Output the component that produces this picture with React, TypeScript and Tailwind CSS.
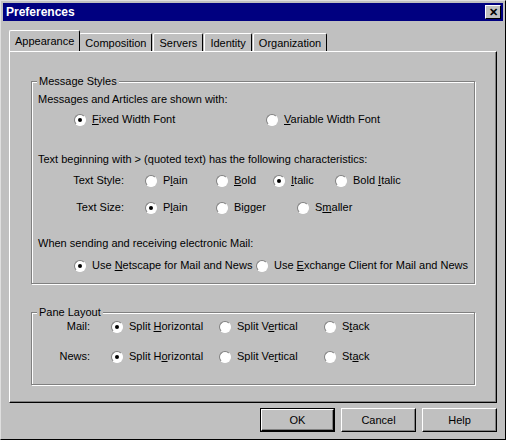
import React from "react"

const face = "bg-[#c0c0c0]"

function Radio({ label, checked, w, u }: { label: string; checked?: boolean; w: string; u?: number }) {
  const chars = label.split("")
  return (
    <div className={`flex items-center gap-[6px] ${w}`}>
      <span className="relative inline-block h-[12px] w-[12px] shrink-0 rounded-full border border-t-[#808080] border-l-[#808080] border-b-white border-r-white bg-white">
        {checked && <span className="absolute left-[3px] top-[3px] h-[4px] w-[4px] rounded-full bg-black" />}
      </span>
      <span className="whitespace-nowrap">
        {chars.map((c, i) => (
          <span key={i} className={i === u ? "underline" : ""}>{c}</span>
        ))}
      </span>
    </div>
  )
}

function Group({ title, className, children }: { title: string; className: string; children: React.ReactNode }) {
  return (
    <div className={`relative border border-[#808080] shadow-[1px_1px_0_#fff,inset_1px_1px_0_#fff] ${className}`}>
      <span className={`absolute -top-[7px] left-[5px] px-[2px] ${face}`}>{title}</span>
      {children}
    </div>
  )
}

function Btn({ label, def }: { label: string; def?: boolean }) {
  return (
    <div className={`flex h-[24px] w-[75px] items-center justify-center ${def ? "border border-black" : ""}`}>
      <div className="flex h-full w-full items-center justify-center border border-t-white border-l-white border-b-black border-r-black shadow-[inset_-1px_-1px_0_#808080]">
        {label}
      </div>
    </div>
  )
}

export default function App() {
  return (
    <div className={`h-[440px] w-[506px] ${face} text-[11px] leading-[13px] text-black font-[family-name:Liberation_Sans,Arial,sans-serif] border border-t-[#dfdfdf] border-l-[#dfdfdf] border-b-black border-r-black`}>
      <div className="mx-[2px] mt-[2px] flex h-[18px] items-center justify-between bg-[#000080] pl-[3px] pr-[2px]">
        <span className="text-[12px] font-bold text-white">Preferences</span>
        <div className={`flex h-[14px] w-[16px] items-center justify-center ${face} border border-t-white border-l-white border-b-black border-r-black text-[11px] font-bold leading-none`}>✕</div>
      </div>

      <div className="mt-[9px] flex items-end pl-[8px]">
        {["Appearance", "Composition", "Servers", "Identity", "Organization"].map((t, i) => (
          <div
            key={t}
            className={`border border-b-0 border-t-white border-l-white border-r-black rounded-t-[2px] px-[5px] ${i === 0 ? "h-[21px] pt-[4px] -mr-[2px] z-10 relative " + face : "h-[18px] pt-[3px] ml-[1px]"}`}
          >
            {t}
          </div>
        ))}
      </div>
      <div className="mx-[8px] h-[352px] border border-t-white border-l-white border-b-black border-r-black shadow-[inset_-1px_-1px_0_#808080] px-[21px] pt-[29px]">
        <Group title="Message Styles" className="h-[203px] px-[6px] pt-[11px]">
          <div>Messages and Articles are shown with:</div>
          <div className="mt-[7px] flex pl-[36px]">
            <Radio label="Fixed Width Font" checked w="w-[192px]" u={0} />
            <Radio label="Variable Width Font" w="w-[180px]" u={0} />
          </div>
          <div className="mt-[27px]">Text beginning with &gt; (quoted text) has the following characteristics:</div>
          <div className="mt-[8px] flex items-center">
            <span className="w-[107px] pr-[21px] text-right">Text Style:</span>
            <Radio label="Plain" w="w-[71px]" u={1} />
            <Radio label="Bold" w="w-[57px]" u={0} />
            <Radio label="Italic" checked w="w-[62px]" u={0} />
            <Radio label="Bold Italic" w="w-[100px]" u={5} />
          </div>
          <div className="mt-[14px] flex items-center">
            <span className="w-[107px] pr-[21px] text-right">Text Size:</span>
            <Radio label="Plain" checked w="w-[71px]" u={1} />
            <Radio label="Bigger" w="w-[81px]" u={2} />
            <Radio label="Smaller" w="w-[100px]" u={1} />
          </div>
          <div className="mt-[23px]">When sending and receiving electronic Mail:</div>
          <div className="mt-[9px] flex pl-[36px]">
            <Radio label="Use Netscape for Mail and News" checked w="w-[192px]" u={4} />
            <Radio label="Use Exchange Client for Mail and News" w="w-[220px]" u={4} />
          </div>
        </Group>
        <Group title="Pane Layout" className="mt-[28px] h-[73px] pt-[7px]">
          <div className="flex items-center">
            <span className="w-[79px] pr-[21px] text-right">Mail:</span>
            <Radio label="Split Horizontal" checked w="w-[108px]" u={6} />
            <Radio label="Split Vertical" w="w-[105px]" u={7} />
            <Radio label="Stack" w="w-[80px]" u={1} />
          </div>
          <div className="mt-[17px] flex items-center">
            <span className="w-[79px] pr-[21px] text-right">News:</span>
            <Radio label="Split Horizontal" checked w="w-[108px]" u={7} />
            <Radio label="Split Vertical" w="w-[105px]" u={8} />
            <Radio label="Stack" w="w-[80px]" u={2} />
          </div>
        </Group>
      </div>
      <div className="mt-[5px] flex justify-end gap-[6px] pr-[8px]">
        <Btn label="OK" def />
        <Btn label="Cancel" />
        <Btn label="Help" />
      </div>
    </div>
  )
}
